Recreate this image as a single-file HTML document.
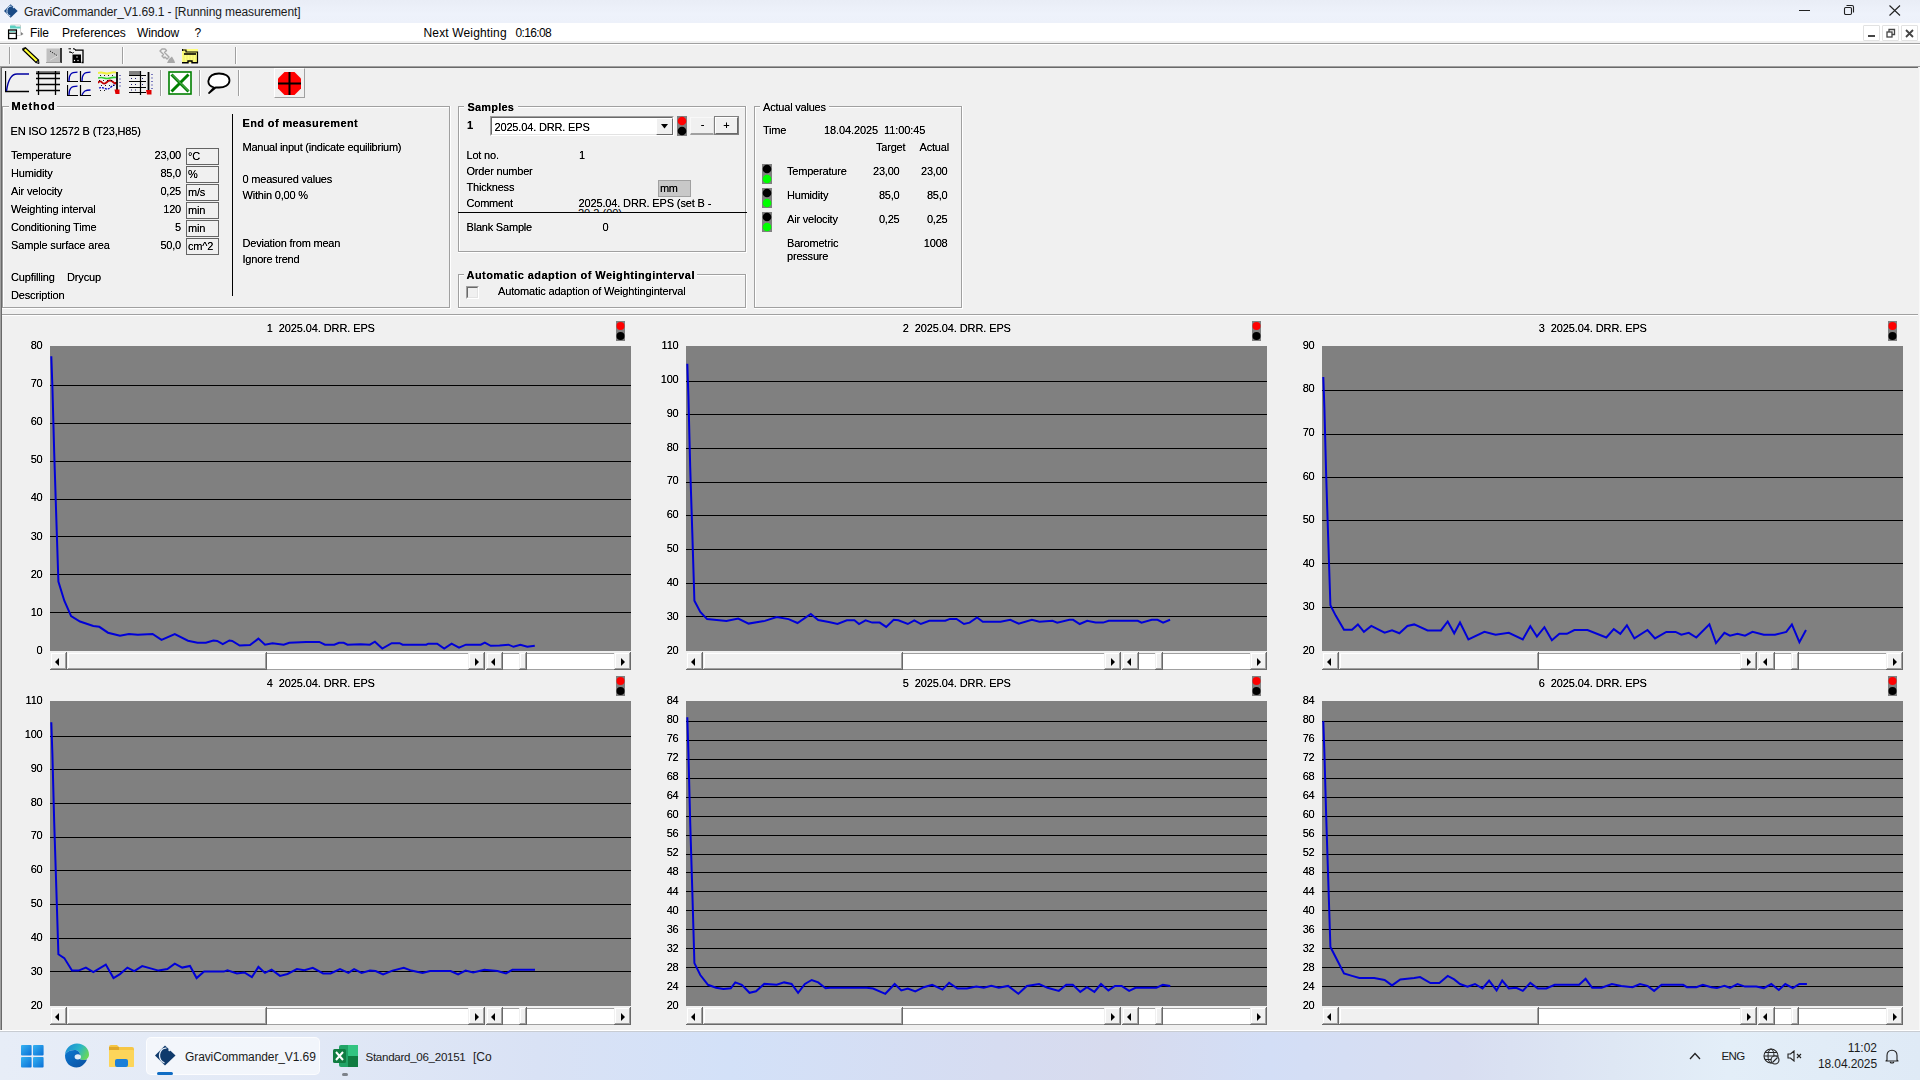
<!DOCTYPE html><html><head><meta charset="utf-8"><style>
html,body{margin:0;padding:0;width:1920px;height:1080px;overflow:hidden;background:#f0f0f0;position:relative;font-family:"Liberation Sans",sans-serif;}
.t{position:absolute;white-space:nowrap;}
svg{position:absolute;}
.c{filter:url(#crisp);}
</style></head><body>
<svg width="0" height="0" style="position:absolute"><filter id="crisp" x="-5%" y="-20%" width="110%" height="140%"><feComponentTransfer><feFuncA type="linear" slope="1.3" intercept="0"/></feComponentTransfer></filter></svg>
<div style="position:absolute;left:0px;top:0px;width:1920px;height:23px;background:linear-gradient(180deg,#e9edf6 0%,#eef2fb 60%,#edf1fa 100%);"></div>
<svg style="left:4px;top:4px" width="14" height="14" viewBox="0 0 21 21"><path d="M10 0.5 L20.5 10.5 L10 20.5 L0 10.5 Z" fill="#1a4a85"/><path d="M11.5 3.2 A6.2 7.4 0 0 0 9.5 17.8" fill="none" stroke="#cfe0f5" stroke-width="1.5"/><circle cx="14.5" cy="5" r="1.4" fill="#cfe0f5"/></svg>
<div class="t" style="left:24px;top:6.14px;font-size:12px;line-height:12px;color:#1a1a1a;letter-spacing:-0.11px;">GraviCommander_V1.69.1 - [Running measurement]</div>
<div style="position:absolute;left:1799px;top:10px;width:11px;height:1px;background:#222;"></div>
<svg style="left:1843px;top:4px" width="12" height="12" viewBox="0 0 12 12"><rect x="1.5" y="3.5" width="7" height="7" rx="1.2" fill="none" stroke="#222" stroke-width="1.1"/><path d="M3.5 1.5 H9 Q10.5 1.5 10.5 3 V8.5" fill="none" stroke="#222" stroke-width="1.1"/></svg>
<svg style="left:1889px;top:5px" width="12" height="11" viewBox="0 0 12 11"><path d="M0.5 0.5 L11 10.5 M11 0.5 L0.5 10.5" stroke="#222" stroke-width="1.1"/></svg>
<div style="position:absolute;left:0px;top:23px;width:1920px;height:18px;background:#ffffff;"></div>
<svg style="left:7px;top:24px" width="18" height="16" viewBox="0 0 18 16"><path d="M3.5 1 H13.5 V11.5 H6" fill="#fff" stroke="#c8c8c8" stroke-width="0.8"/><path d="M3 1.5 H8 L9 2.5 H13.5 V4.5 H3 Z" fill="#5ccfc0"/><path d="M14 8 L16.5 10 L14 11.5 Z" fill="#808080"/><rect x="1.6" y="6" width="7.8" height="8.6" fill="#fff" stroke="#000" stroke-width="1.3"/><path d="M2.5 7.7 H8.5" stroke="#5ccfc0" stroke-width="1.1"/><path d="M1.6 9.3 H9.4" stroke="#000" stroke-width="1.1"/></svg>
<div class="t" style="left:30px;top:26.84px;font-size:12px;line-height:12px;color:#000;letter-spacing:-0.1px;">File</div>
<div class="t" style="left:62px;top:26.84px;font-size:12px;line-height:12px;color:#000;letter-spacing:-0.1px;">Preferences</div>
<div class="t" style="left:137px;top:26.84px;font-size:12px;line-height:12px;color:#000;letter-spacing:-0.1px;">Window</div>
<div class="t" style="left:194.5px;top:26.84px;font-size:12px;line-height:12px;color:#000;letter-spacing:-0.1px;">?</div>
<div class="t" style="left:423.5px;top:26.84px;font-size:12px;line-height:12px;color:#000;letter-spacing:0.15px;">Next Weighting</div>
<div class="t" style="left:515.5px;top:26.84px;font-size:12px;line-height:12px;color:#000;letter-spacing:-0.63px;">0:16:08</div>
<div style="position:absolute;left:1863px;top:25px;width:17px;height:16px;background:#fff;border:1px solid #e2e2e2;box-sizing:border-box;border-radius:1px;"></div>
<div style="position:absolute;left:1882px;top:25px;width:17px;height:16px;background:#fff;border:1px solid #e2e2e2;box-sizing:border-box;border-radius:1px;"></div>
<div style="position:absolute;left:1901px;top:25px;width:17px;height:16px;background:#fff;border:1px solid #e2e2e2;box-sizing:border-box;border-radius:1px;"></div>
<div style="position:absolute;left:1868px;top:35px;width:7px;height:2px;background:#444;"></div>
<svg style="left:1886px;top:28px" width="10" height="10" viewBox="0 0 10 10"><rect x="1" y="4" width="5" height="5" fill="none" stroke="#444" stroke-width="1.3"/><path d="M3 4 V1.5 H8.5 V6.5 H6" fill="none" stroke="#444" stroke-width="1.3"/></svg>
<svg style="left:1905px;top:29px" width="9" height="9" viewBox="0 0 9 9"><path d="M1 1 L8 8 M8 1 L1 8" stroke="#444" stroke-width="1.8"/></svg>
<div style="position:absolute;left:0px;top:43px;width:1920px;height:1px;background:#a0a0a0;"></div>
<div style="position:absolute;left:0px;top:44px;width:1920px;height:1px;background:#ffffff;"></div>
<div style="position:absolute;left:0px;top:45px;width:1920px;height:21px;background:#f0f0f0;"></div>
<div style="position:absolute;left:9px;top:47px;width:1px;height:17px;background:#a0a0a0;"></div>
<div style="position:absolute;left:10px;top:47px;width:1px;height:17px;background:#fff;"></div>
<div style="position:absolute;left:122px;top:47px;width:1px;height:17px;background:#a0a0a0;"></div>
<div style="position:absolute;left:123px;top:47px;width:1px;height:17px;background:#fff;"></div>
<div style="position:absolute;left:235px;top:47px;width:1px;height:17px;background:#a0a0a0;"></div>
<div style="position:absolute;left:236px;top:47px;width:1px;height:17px;background:#fff;"></div>
<svg style="left:22px;top:47px" width="18" height="18" viewBox="0 0 18 18"><path d="M1 3 L3.5 0.8 L16.5 13 L14 15.5 Z" fill="#ffff30" stroke="#000" stroke-width="1.2" stroke-linejoin="miter"/><path d="M14 15.5 L16.5 13 L17 16.5 Z" fill="#c0c0c0" stroke="#000" stroke-width="1"/><path d="M2.5 4.5 L12.5 13.8" stroke="#000" stroke-width="0.8" stroke-dasharray="1 1"/><path d="M1.5 1 H3.5 M1 1 V3" stroke="#000" stroke-width="1.2"/></svg>
<svg style="left:46px;top:48px" width="16" height="15" viewBox="0 0 16 15"><rect x="0.5" y="0.5" width="14" height="13.5" fill="#c0c0c0"/><path d="M15 0 V15" stroke="#000" stroke-width="1.5"/><path d="M0 14.5 H14.5" stroke="#a0a0a0" stroke-width="1"/><path d="M4 3 L11 7.5" stroke="#000" stroke-width="1" stroke-dasharray="1 1.3"/><path d="M11.5 8 L3.5 12.5" stroke="#fff" stroke-width="1" stroke-dasharray="1 1.3"/></svg>
<svg style="left:68px;top:48px" width="17" height="16" viewBox="0 0 17 16"><path d="M7 2.2 H15 V14.5 H13.5" fill="none" stroke="#000" stroke-width="1.3"/><rect x="4.5" y="6.5" width="8.5" height="8.5" fill="#000"/><circle cx="6.5" cy="12.5" r="0.7" fill="#fff"/><circle cx="10" cy="12.5" r="0.7" fill="#fff"/><circle cx="9" cy="9" r="0.7" fill="#fff"/><path d="M0.5 0.8 H3 M1 4 H3 L4 5 M5 0.8 H6.5 L7.5 2 M4.5 5.5 L5.5 4" stroke="#000" stroke-width="1"/></svg>
<svg style="left:159px;top:48px" width="17" height="16" viewBox="0 0 17 16"><path d="M1 3 L3 1 H6 L7.5 2.5 L5.5 4.5 L10 9 L8 11 L6 9 L5 10 L3 8 L4.5 6.5 Z" fill="none" stroke="#a8a8a8" stroke-width="1.4" stroke-linejoin="round"/><path d="M10 11 L13 8.5 L15.5 13 L16 15 H8 Z" fill="#a8a8a8"/></svg>
<svg style="left:182px;top:49px" width="17" height="15" viewBox="0 0 17 15"><rect x="0" y="0" width="16" height="14" fill="#ffff80"/><path d="M2 1 V13 M5 1 V13 M8 3 V13 M11 3 V13 M14 3 V13" stroke="#e6e66a" stroke-width="0.8"/><path d="M0.5 0 V2 M0.5 1 H4 V3 H15.5 V14" fill="none" stroke="#000" stroke-width="1.2"/><path d="M2 5 H14" stroke="#000" stroke-width="1.6"/><path d="M0 13.8 H6 V12 H10 V13.8 H16" fill="none" stroke="#000" stroke-width="1.4"/></svg>
<div style="position:absolute;left:0px;top:66px;width:1920px;height:1px;background:#a0a0a0;"></div>
<div style="position:absolute;left:0px;top:67px;width:1920px;height:1px;background:#696969;"></div>
<div style="position:absolute;left:0px;top:67px;width:1px;height:965px;background:#a0a0a0;"></div>
<div style="position:absolute;left:1px;top:67px;width:1px;height:965px;background:#696969;"></div>
<svg style="left:5px;top:71px" width="24" height="22" viewBox="0 0 24 22"><path d="M0.5 0 V20.5 H24" fill="none" stroke="#000" stroke-width="1.3"/><path d="M1.5 20 C3 9 7 3 12 3 H24" fill="none" stroke="#0000a0" stroke-width="1.4"/></svg>
<svg style="left:36px;top:71px" width="24" height="24" viewBox="0 0 24 24"><rect x="0" y="0" width="24" height="2" fill="#808080"/><path d="M0 2.5 H24 M0 7.5 H24 M0 13.5 H24 M0 19.5 H24 M2.5 0 V24 M19.5 0 V24" stroke="#000" stroke-width="1.3"/></svg>
<svg style="left:67px;top:71px" width="25" height="25" viewBox="0 0 25 25"><path d="M0.5 0 V10.5 H11.0" fill="none" stroke="#000" stroke-width="1.2"/><path d="M2.0 10 C2.0 4 3.5 1.2 10.5 1.2" fill="none" stroke="#0000b0" stroke-width="1.3"/><path d="M13.5 0 V10.5 H24.0" fill="none" stroke="#000" stroke-width="1.2"/><path d="M15.0 10 C15.0 4 16.5 1.2 23.5 1.2" fill="none" stroke="#0000b0" stroke-width="1.3"/><path d="M0.5 14 V24.5 H11.0" fill="none" stroke="#000" stroke-width="1.2"/><path d="M2.0 24 C2.0 18 3.5 15.2 10.5 15.2" fill="none" stroke="#0000b0" stroke-width="1.3"/><path d="M13.5 14 V24.5 H24.0" fill="none" stroke="#000" stroke-width="1.2"/><path d="M15.0 24 C16.5 20 18.5 19 23.5 19" fill="none" stroke="#0000b0" stroke-width="1.3"/></svg>
<svg style="left:98px;top:71px" width="24" height="24" viewBox="0 0 24 24"><path d="M0 2 Q3 1 6 2 T12 2 T18 1.5" stroke="#f0f040" stroke-width="2" fill="none"/><path d="M0 7 Q3 6 6 7 T12 7 T18 6.5" stroke="#30d030" stroke-width="1.6" fill="none"/><path d="M0 12 Q2 9 4 11.5 T9 11 T15 11 T18 11" stroke="#c00000" stroke-width="1.8" fill="none"/><path d="M1 17 Q4 16 7 17.5 T13 16 T17 15" stroke="#0000c0" stroke-width="1.3" fill="none" stroke-dasharray="2 1"/><path d="M2 4.5 H17 M1 9.5 H17 M3 14.5 H17 M2 19.5 H10" stroke="#000" stroke-width="0.9" stroke-dasharray="1 3"/><path d="M19 1 V19" stroke="#000" stroke-width="1.8"/><path d="M16.5 18.5 H21.5 V23 H17.5 Z" fill="#e00000"/><path d="M22 4 V17" stroke="#00008a" stroke-width="1" stroke-dasharray="1 2.5"/></svg>
<svg style="left:129px;top:71px" width="24" height="24" viewBox="0 0 24 24"><rect x="0" y="0" width="11" height="4" fill="#808080"/><path d="M0 4.5 H17 M0 10.5 H17 M0 16.5 H17 M0 21.5 H17 M11.5 0 V24" stroke="#000" stroke-width="1.2"/><path d="M19.5 1 V20" stroke="#000" stroke-width="1.8"/><path d="M17 19 H22.5 V23.5 H18 Z" fill="#e00000"/><path d="M2 7.5 H10 M13 7.5 H17 M2 13.5 H10 M13 13.5 H17 M2 19 H10" stroke="#000060" stroke-width="0.9" stroke-dasharray="1 3"/><path d="M23 3 V18" stroke="#00008a" stroke-width="1" stroke-dasharray="1 2.5"/></svg>
<div style="position:absolute;left:160px;top:70px;width:1px;height:26px;background:#a0a0a0;"></div>
<div style="position:absolute;left:161px;top:70px;width:1px;height:26px;background:#fff;"></div>
<svg style="left:168px;top:71px" width="24" height="24" viewBox="0 0 24 24"><rect x="1" y="1" width="22" height="22" fill="#fff" stroke="#008000" stroke-width="1.6"/><path d="M3.5 3.5 L20.5 20.5 M20.5 3.5 L3.5 20.5" stroke="#008000" stroke-width="3"/><path d="M4 3.5 L20.5 20" stroke="#e0f0e0" stroke-width="0.5"/></svg>
<div style="position:absolute;left:199px;top:70px;width:1px;height:26px;background:#a0a0a0;"></div>
<div style="position:absolute;left:200px;top:70px;width:1px;height:26px;background:#fff;"></div>
<svg style="left:207px;top:72px" width="24" height="22" viewBox="0 0 24 22"><path d="M7 15.5 C2 14 1 11 1.5 8.5 C2.5 3.5 7 1.5 12 1.5 C18 1.5 22.5 4 22.5 8.5 C22.5 13 17.5 15.5 12 15.5 C11 15.5 10 15.5 9 15.3 L2 21 Z" fill="#fff" stroke="#000" stroke-width="1.8" stroke-linejoin="round"/></svg>
<div style="position:absolute;left:238px;top:70px;width:1px;height:26px;background:#a0a0a0;"></div>
<div style="position:absolute;left:239px;top:70px;width:1px;height:26px;background:#fff;"></div>
<div style="position:absolute;left:274px;top:68px;width:31px;height:30px;background:#f0f0f0;border-top:1px solid #fff;border-left:1px solid #fff;border-right:1px solid #a0a0a0;border-bottom:1px solid #a0a0a0;box-sizing:border-box;"></div>
<svg style="left:278px;top:72px" width="23" height="23" viewBox="0 0 23 23"><path d="M6.5 0 H16.5 L23 6.5 V16.5 L16.5 23 H6.5 L0 16.5 V6.5 Z" fill="#ff0000"/><path d="M11.5 0 V23 M0 11.5 H23" stroke="#000" stroke-width="2"/></svg>
<div style="position:absolute;left:2px;top:106px;width:7px;height:1px;background:#a0a0a0;"></div>
<div style="position:absolute;left:3px;top:107px;width:6px;height:1px;background:#fff;"></div>
<div style="position:absolute;left:57px;top:106px;width:393px;height:1px;background:#a0a0a0;"></div>
<div style="position:absolute;left:57px;top:107px;width:393px;height:1px;background:#fff;"></div>
<div style="position:absolute;left:2px;top:106px;width:1px;height:202px;background:#a0a0a0;"></div>
<div style="position:absolute;left:3px;top:107px;width:1px;height:200px;background:#fff;"></div>
<div style="position:absolute;left:449px;top:106px;width:1px;height:202px;background:#a0a0a0;"></div>
<div style="position:absolute;left:450px;top:106px;width:1px;height:203px;background:#fff;"></div>
<div style="position:absolute;left:2px;top:307px;width:448px;height:1px;background:#a0a0a0;"></div>
<div style="position:absolute;left:2px;top:308px;width:449px;height:1px;background:#fff;"></div>
<div class="t c" style="left:11.6px;top:101.29px;font-size:11px;line-height:11px;font-weight:bold;color:#000;letter-spacing:0.8px;">Method</div>
<div class="t c" style="left:10.5px;top:125.69px;font-size:11px;line-height:11px;color:#000;letter-spacing:-0.15px;">EN ISO 12572 B (T23,H85)</div>
<div class="t c" style="left:11px;top:149.69px;font-size:11px;line-height:11px;color:#000;letter-spacing:-0.15px;">Temperature</div>
<div class="t c" style="right:1739px;top:149.69px;font-size:11px;line-height:11px;color:#000;letter-spacing:-0.2px;">23,00</div>
<div style="position:absolute;left:186px;top:148.0px;width:33px;height:17px;border:1px solid #646464;box-sizing:border-box;border-right-color:#646464;"></div>
<div class="t c" style="left:188px;top:150.69px;font-size:11px;line-height:11px;color:#000;letter-spacing:-0.2px;">°C</div>
<div class="t c" style="left:11px;top:167.69px;font-size:11px;line-height:11px;color:#000;letter-spacing:-0.15px;">Humidity</div>
<div class="t c" style="right:1739px;top:167.69px;font-size:11px;line-height:11px;color:#000;letter-spacing:-0.2px;">85,0</div>
<div style="position:absolute;left:186px;top:166.0px;width:33px;height:17px;border:1px solid #646464;box-sizing:border-box;border-right-color:#646464;"></div>
<div class="t c" style="left:188px;top:168.69px;font-size:11px;line-height:11px;color:#000;letter-spacing:-0.2px;">%</div>
<div class="t c" style="left:11px;top:185.69px;font-size:11px;line-height:11px;color:#000;letter-spacing:-0.15px;">Air velocity</div>
<div class="t c" style="right:1739px;top:185.69px;font-size:11px;line-height:11px;color:#000;letter-spacing:-0.2px;">0,25</div>
<div style="position:absolute;left:186px;top:184.0px;width:33px;height:17px;border:1px solid #646464;box-sizing:border-box;border-right-color:#646464;"></div>
<div class="t c" style="left:188px;top:186.69px;font-size:11px;line-height:11px;color:#000;letter-spacing:-0.2px;">m/s</div>
<div class="t c" style="left:11px;top:203.69px;font-size:11px;line-height:11px;color:#000;letter-spacing:-0.15px;">Weighting interval</div>
<div class="t c" style="right:1739px;top:203.69px;font-size:11px;line-height:11px;color:#000;letter-spacing:-0.2px;">120</div>
<div style="position:absolute;left:186px;top:202.0px;width:33px;height:17px;border:1px solid #646464;box-sizing:border-box;border-right-color:#646464;"></div>
<div class="t c" style="left:188px;top:204.69px;font-size:11px;line-height:11px;color:#000;letter-spacing:-0.2px;">min</div>
<div class="t c" style="left:11px;top:221.69px;font-size:11px;line-height:11px;color:#000;letter-spacing:-0.15px;">Conditioning Time</div>
<div class="t c" style="right:1739px;top:221.69px;font-size:11px;line-height:11px;color:#000;letter-spacing:-0.2px;">5</div>
<div style="position:absolute;left:186px;top:220.0px;width:33px;height:17px;border:1px solid #646464;box-sizing:border-box;border-right-color:#646464;"></div>
<div class="t c" style="left:188px;top:222.69px;font-size:11px;line-height:11px;color:#000;letter-spacing:-0.2px;">min</div>
<div class="t c" style="left:11px;top:239.69px;font-size:11px;line-height:11px;color:#000;letter-spacing:-0.15px;">Sample surface area</div>
<div class="t c" style="right:1739px;top:239.69px;font-size:11px;line-height:11px;color:#000;letter-spacing:-0.2px;">50,0</div>
<div style="position:absolute;left:186px;top:238.0px;width:33px;height:17px;border:1px solid #646464;box-sizing:border-box;border-right-color:#646464;"></div>
<div class="t c" style="left:188px;top:240.69px;font-size:11px;line-height:11px;color:#000;letter-spacing:-0.2px;">cm^2</div>
<div class="t c" style="left:11px;top:271.69px;font-size:11px;line-height:11px;color:#000;letter-spacing:-0.15px;">Cupfilling</div>
<div class="t c" style="left:67px;top:271.69px;font-size:11px;line-height:11px;color:#000;letter-spacing:-0.15px;">Drycup</div>
<div class="t c" style="left:11px;top:289.69px;font-size:11px;line-height:11px;color:#000;letter-spacing:-0.15px;">Description</div>
<div style="position:absolute;left:232px;top:114px;width:1px;height:182px;background:#000;"></div>
<div class="t c" style="left:242.5px;top:117.69px;font-size:11px;line-height:11px;font-weight:bold;color:#000;letter-spacing:0.38px;">End of measurement</div>
<div class="t c" style="left:242.5px;top:141.69px;font-size:11px;line-height:11px;color:#000;letter-spacing:-0.25px;">Manual input (indicate equilibrium)</div>
<div class="t c" style="left:242.5px;top:173.69px;font-size:11px;line-height:11px;color:#000;letter-spacing:-0.2px;">0 measured values</div>
<div class="t c" style="left:242.5px;top:189.69px;font-size:11px;line-height:11px;color:#000;letter-spacing:-0.2px;">Within 0,00 %</div>
<div class="t c" style="left:242.5px;top:238.19px;font-size:11px;line-height:11px;color:#000;letter-spacing:-0.2px;">Deviation from mean</div>
<div class="t c" style="left:242.5px;top:253.69px;font-size:11px;line-height:11px;color:#000;letter-spacing:-0.2px;">Ignore trend</div>
<div style="position:absolute;left:458px;top:106px;width:6px;height:1px;background:#a0a0a0;"></div>
<div style="position:absolute;left:459px;top:107px;width:5px;height:1px;background:#fff;"></div>
<div style="position:absolute;left:518px;top:106px;width:228px;height:1px;background:#a0a0a0;"></div>
<div style="position:absolute;left:518px;top:107px;width:228px;height:1px;background:#fff;"></div>
<div style="position:absolute;left:458px;top:106px;width:1px;height:146px;background:#a0a0a0;"></div>
<div style="position:absolute;left:459px;top:107px;width:1px;height:144px;background:#fff;"></div>
<div style="position:absolute;left:745px;top:106px;width:1px;height:146px;background:#a0a0a0;"></div>
<div style="position:absolute;left:746px;top:106px;width:1px;height:147px;background:#fff;"></div>
<div style="position:absolute;left:458px;top:251px;width:288px;height:1px;background:#a0a0a0;"></div>
<div style="position:absolute;left:458px;top:252px;width:289px;height:1px;background:#fff;"></div>
<div class="t c" style="left:467.5px;top:101.69px;font-size:11px;line-height:11px;font-weight:bold;color:#000;letter-spacing:0.2px;">Samples</div>
<div class="t c" style="left:467px;top:119.69px;font-size:11px;line-height:11px;font-weight:bold;color:#000;">1</div>
<div style="position:absolute;left:490px;top:116px;width:184px;height:20px;background:#fff;border-top:1px solid #a0a0a0;border-left:1px solid #a0a0a0;border-right:1px solid #fff;border-bottom:1px solid #fff;box-sizing:border-box;"></div>
<div style="position:absolute;left:491px;top:117px;width:182px;height:18px;border-top:1px solid #696969;border-left:1px solid #696969;border-right:1px solid #e3e3e3;border-bottom:1px solid #e3e3e3;box-sizing:border-box;"></div>
<div class="t c" style="left:494.5px;top:121.69px;font-size:11px;line-height:11px;color:#000;letter-spacing:-0.16px;">2025.04. DRR. EPS</div>
<div style="position:absolute;left:656px;top:118px;width:17px;height:17px;background:#f0f0f0;border-top:1px solid #fff;border-left:1px solid #fff;border-right:1px solid #696969;border-bottom:1px solid #696969;box-sizing:border-box;"></div>
<svg style="left:661px;top:124px" width="8" height="5"><path d="M0 0 H7 L3.5 4.5 Z" fill="#000"/></svg>
<div style="position:absolute;left:677px;top:116px;width:10px;height:20px;background:#808080;"></div>
<svg style="left:677px;top:116px" width="10" height="20"><circle cx="5" cy="5" r="4.3" fill="#ff0000"/><circle cx="5" cy="15" r="4.3" fill="#000"/></svg>
<div style="position:absolute;left:690px;top:117px;width:24px;height:18px;background:#f0f0f0;border-top:1px solid #f8f8f8;border-left:1px solid #f8f8f8;border-bottom:2px solid #a0a0a0;border-right:1px solid #e0e0e0;box-sizing:border-box;"></div>
<div class="t c" style="left:702.5px;transform:translateX(-50%);top:118.69px;font-size:11px;line-height:11px;color:#000;">-</div>
<div style="position:absolute;left:714px;top:116px;width:25px;height:19px;background:#f0f0f0;border:1px solid #808080;box-sizing:border-box;"></div>
<div style="position:absolute;left:715px;top:117px;width:23px;height:17px;border-top:1px solid #fff;border-left:1px solid #fff;border-right:1px solid #696969;border-bottom:1px solid #696969;box-sizing:border-box;"></div>
<div class="t c" style="left:726.5px;transform:translateX(-50%);top:119.69px;font-size:11px;line-height:11px;color:#000;">+</div>
<div class="t c" style="left:466.5px;top:149.69px;font-size:11px;line-height:11px;color:#000;letter-spacing:-0.2px;">Lot no.</div>
<div class="t c" style="left:466.5px;top:165.69px;font-size:11px;line-height:11px;color:#000;letter-spacing:-0.2px;">Order number</div>
<div class="t c" style="left:466.5px;top:181.69px;font-size:11px;line-height:11px;color:#000;letter-spacing:-0.2px;">Thickness</div>
<div class="t c" style="left:466.5px;top:197.69px;font-size:11px;line-height:11px;color:#000;letter-spacing:-0.2px;">Comment</div>
<div class="t c" style="left:579px;top:149.69px;font-size:11px;line-height:11px;color:#000;">1</div>
<div style="position:absolute;left:658px;top:180px;width:33px;height:17px;background:#c8c8c8;border:1px solid #a0a0a0;box-sizing:border-box;"></div>
<div class="t c" style="left:660px;top:183.19px;font-size:11px;line-height:11px;color:#000;letter-spacing:-0.3px;">mm</div>
<div class="t c" style="left:578.5px;top:197.69px;font-size:11px;line-height:11px;color:#000;letter-spacing:-0.14px;">2025.04. DRR. EPS (set B -</div>
<div style="position:absolute;left:578px;top:209px;width:60px;height:3px;overflow:hidden;"><div class="t" style="left:0;top:-1px;font-size:11px;line-height:11px;">20.2 (00)</div></div>
<div style="position:absolute;left:458px;top:212px;width:289px;height:1px;background:#000;"></div>
<div class="t c" style="left:466.5px;top:221.69px;font-size:11px;line-height:11px;color:#000;letter-spacing:-0.2px;">Blank Sample</div>
<div class="t c" style="left:602.5px;top:221.69px;font-size:11px;line-height:11px;color:#000;">0</div>
<div style="position:absolute;left:458px;top:274px;width:6px;height:1px;background:#a0a0a0;"></div>
<div style="position:absolute;left:459px;top:275px;width:5px;height:1px;background:#fff;"></div>
<div style="position:absolute;left:697px;top:274px;width:49px;height:1px;background:#a0a0a0;"></div>
<div style="position:absolute;left:697px;top:275px;width:49px;height:1px;background:#fff;"></div>
<div style="position:absolute;left:458px;top:274px;width:1px;height:34px;background:#a0a0a0;"></div>
<div style="position:absolute;left:459px;top:275px;width:1px;height:32px;background:#fff;"></div>
<div style="position:absolute;left:745px;top:274px;width:1px;height:34px;background:#a0a0a0;"></div>
<div style="position:absolute;left:746px;top:274px;width:1px;height:35px;background:#fff;"></div>
<div style="position:absolute;left:458px;top:307px;width:288px;height:1px;background:#a0a0a0;"></div>
<div style="position:absolute;left:458px;top:308px;width:289px;height:1px;background:#fff;"></div>
<div class="t c" style="left:466.5px;top:270.19px;font-size:11px;line-height:11px;font-weight:bold;color:#000;letter-spacing:0.44px;">Automatic adaption of Weightinginterval</div>
<div style="position:absolute;left:466px;top:286px;width:13px;height:13px;background:#f0f0f0;border-top:1px solid #a0a0a0;border-left:1px solid #a0a0a0;border-right:1px solid #fff;border-bottom:1px solid #fff;box-sizing:border-box;"></div>
<div style="position:absolute;left:467px;top:287px;width:11px;height:11px;border-top:1px solid #696969;border-left:1px solid #696969;border-right:1px solid #e3e3e3;border-bottom:1px solid #e3e3e3;box-sizing:border-box;"></div>
<div class="t c" style="left:498px;top:285.69px;font-size:11px;line-height:11px;color:#000;letter-spacing:-0.155px;">Automatic adaption of Weightinginterval</div>
<div style="position:absolute;left:754px;top:106px;width:6px;height:1px;background:#a0a0a0;"></div>
<div style="position:absolute;left:755px;top:107px;width:5px;height:1px;background:#fff;"></div>
<div style="position:absolute;left:829px;top:106px;width:133px;height:1px;background:#a0a0a0;"></div>
<div style="position:absolute;left:829px;top:107px;width:133px;height:1px;background:#fff;"></div>
<div style="position:absolute;left:754px;top:106px;width:1px;height:202px;background:#a0a0a0;"></div>
<div style="position:absolute;left:755px;top:107px;width:1px;height:200px;background:#fff;"></div>
<div style="position:absolute;left:961px;top:106px;width:1px;height:202px;background:#a0a0a0;"></div>
<div style="position:absolute;left:962px;top:106px;width:1px;height:203px;background:#fff;"></div>
<div style="position:absolute;left:754px;top:307px;width:208px;height:1px;background:#a0a0a0;"></div>
<div style="position:absolute;left:754px;top:308px;width:209px;height:1px;background:#fff;"></div>
<div class="t c" style="left:763px;top:101.69px;font-size:11px;line-height:11px;color:#000;letter-spacing:-0.2px;">Actual values</div>
<div class="t c" style="left:763px;top:125.19px;font-size:11px;line-height:11px;color:#000;letter-spacing:-0.2px;">Time</div>
<div class="t c" style="left:824px;top:125.19px;font-size:11px;line-height:11px;color:#000;letter-spacing:-0.1px;">18.04.2025&nbsp;&nbsp;11:00:45</div>
<div class="t c" style="left:876px;top:141.69px;font-size:11px;line-height:11px;color:#000;letter-spacing:-0.2px;">Target</div>
<div class="t c" style="left:919.5px;top:141.69px;font-size:11px;line-height:11px;color:#000;letter-spacing:-0.2px;">Actual</div>
<div style="position:absolute;left:762px;top:164px;width:10px;height:20px;background:#808080;"></div>
<svg style="left:762px;top:164px" width="10" height="20"><circle cx="5" cy="5" r="4.3" fill="#000"/><circle cx="5" cy="15" r="4.3" fill="#00ff00"/></svg>
<div class="t c" style="left:787px;top:165.69px;font-size:11px;line-height:11px;color:#000;letter-spacing:-0.2px;">Temperature</div>
<div class="t c" style="right:1020.5px;top:165.69px;font-size:11px;line-height:11px;color:#000;letter-spacing:-0.2px;">23,00</div>
<div class="t c" style="right:972.5px;top:165.69px;font-size:11px;line-height:11px;color:#000;letter-spacing:-0.2px;">23,00</div>
<div style="position:absolute;left:762px;top:188px;width:10px;height:20px;background:#808080;"></div>
<svg style="left:762px;top:188px" width="10" height="20"><circle cx="5" cy="5" r="4.3" fill="#000"/><circle cx="5" cy="15" r="4.3" fill="#00ff00"/></svg>
<div class="t c" style="left:787px;top:189.69px;font-size:11px;line-height:11px;color:#000;letter-spacing:-0.2px;">Humidity</div>
<div class="t c" style="right:1020.5px;top:189.69px;font-size:11px;line-height:11px;color:#000;letter-spacing:-0.2px;">85,0</div>
<div class="t c" style="right:972.5px;top:189.69px;font-size:11px;line-height:11px;color:#000;letter-spacing:-0.2px;">85,0</div>
<div style="position:absolute;left:762px;top:212px;width:10px;height:20px;background:#808080;"></div>
<svg style="left:762px;top:212px" width="10" height="20"><circle cx="5" cy="5" r="4.3" fill="#000"/><circle cx="5" cy="15" r="4.3" fill="#00ff00"/></svg>
<div class="t c" style="left:787px;top:213.69px;font-size:11px;line-height:11px;color:#000;letter-spacing:-0.2px;">Air velocity</div>
<div class="t c" style="right:1020.5px;top:213.69px;font-size:11px;line-height:11px;color:#000;letter-spacing:-0.2px;">0,25</div>
<div class="t c" style="right:972.5px;top:213.69px;font-size:11px;line-height:11px;color:#000;letter-spacing:-0.2px;">0,25</div>
<div class="t c" style="left:787px;top:237.69px;font-size:11px;line-height:11px;color:#000;letter-spacing:-0.2px;">Barometric</div>
<div class="t c" style="left:787px;top:250.69px;font-size:11px;line-height:11px;color:#000;letter-spacing:-0.2px;">pressure</div>
<div class="t c" style="right:972.5px;top:237.69px;font-size:11px;line-height:11px;color:#000;letter-spacing:-0.2px;">1008</div>
<div style="position:absolute;left:2px;top:314px;width:1918px;height:1px;background:#a0a0a0;"></div>
<div style="position:absolute;left:2px;top:315px;width:1918px;height:1px;background:#fff;"></div>
<div class="t c" style="left:266.8px;top:322.69px;font-size:11px;line-height:11px;color:#000;letter-spacing:-0.1px;">1&nbsp;&nbsp;2025.04. DRR. EPS</div>
<div style="position:absolute;left:616px;top:321px;width:9px;height:20px;background:#808080;"></div>
<svg style="left:616px;top:321px" width="9" height="20"><circle cx="4.5" cy="5" r="4" fill="#ff0000"/><circle cx="4.5" cy="15" r="4" fill="#000"/></svg>
<svg style="left:50px;top:346px" width="581" height="305" viewBox="0 0 581 305"><rect x="0" y="0" width="581" height="305" fill="#808080"/><rect x="0" y="39" width="581" height="1" fill="#000"/><rect x="0" y="77" width="581" height="1" fill="#000"/><rect x="0" y="115" width="581" height="1" fill="#000"/><rect x="0" y="153" width="581" height="1" fill="#000"/><rect x="0" y="190" width="581" height="1" fill="#000"/><rect x="0" y="228" width="581" height="1" fill="#000"/><rect x="0" y="266" width="581" height="1" fill="#000"/><polyline points="1.3,10.3 2.4,41.0 4.2,106.6 6.3,171.8 8.4,235.5 14.3,254.7 21.1,270.1 30.0,275.5 43.3,280.0 49.3,280.8 58.0,286.7 70.0,289.7 78.9,288.0 87.8,288.8 102.6,288.0 111.5,293.8 124.8,288.0 138.0,294.7 147.5,296.8 155.9,296.8 163.4,294.5 167.2,294.9 172.8,298.2 179.4,294.5 182.2,294.9 189.7,299.6 200.0,299.1 208.4,292.6 215.0,298.7 222.5,297.3 233.7,298.7 239.3,296.8 256.2,295.9 269.3,295.9 275.0,298.7 284.3,298.7 289.0,296.8 293.7,296.8 297.5,298.7 310.6,298.2 319.9,298.7 324.9,295.7 332.3,302.6 341.7,297.2 349.6,297.2 352.6,298.7 376.3,298.7 378.3,297.7 387.2,297.7 394.2,302.6 401.6,297.7 409.0,301.6 415.9,298.7 430.8,298.7 434.8,296.7 440.7,299.8 449.6,299.4 458.5,298.7 463.5,300.8 470.4,298.7 477.3,300.8 484.8,299.8" fill="none" stroke="#0000d8" stroke-width="2" stroke-linejoin="miter"/></svg>
<div class="t c" style="right:1877.5px;top:339.79px;font-size:11px;line-height:11px;color:#000;letter-spacing:-0.2px;">80</div>
<div class="t c" style="right:1877.5px;top:377.94px;font-size:11px;line-height:11px;color:#000;letter-spacing:-0.2px;">70</div>
<div class="t c" style="right:1877.5px;top:416.09px;font-size:11px;line-height:11px;color:#000;letter-spacing:-0.2px;">60</div>
<div class="t c" style="right:1877.5px;top:454.24px;font-size:11px;line-height:11px;color:#000;letter-spacing:-0.2px;">50</div>
<div class="t c" style="right:1877.5px;top:492.39px;font-size:11px;line-height:11px;color:#000;letter-spacing:-0.2px;">40</div>
<div class="t c" style="right:1877.5px;top:530.54px;font-size:11px;line-height:11px;color:#000;letter-spacing:-0.2px;">30</div>
<div class="t c" style="right:1877.5px;top:568.69px;font-size:11px;line-height:11px;color:#000;letter-spacing:-0.2px;">20</div>
<div class="t c" style="right:1877.5px;top:606.84px;font-size:11px;line-height:11px;color:#000;letter-spacing:-0.2px;">10</div>
<div class="t c" style="right:1877.5px;top:644.99px;font-size:11px;line-height:11px;color:#000;letter-spacing:-0.2px;">0</div>
<div style="position:absolute;left:50px;top:652px;width:17px;height:18px;background:#f0f0f0;box-shadow:inset -1px -1px 0 #696969, inset 1px 1px 0 #f0f0f0, inset -2px -2px 0 #a0a0a0, inset 2px 2px 0 #fff;"></div>
<svg style="left:55px;top:658px" width="4" height="8"><path d="M4 0 V8 L0 4 Z" fill="#000"/></svg>
<div style="position:absolute;left:67px;top:652px;width:200px;height:18px;background:#f0f0f0;box-shadow:inset -1px -1px 0 #696969, inset 1px 1px 0 #f0f0f0, inset -2px -2px 0 #a0a0a0, inset 2px 2px 0 #fff;"></div>
<div style="position:absolute;left:267px;top:652px;width:201px;height:18px;background:#fff;border-top:1px solid #f0f0f0;box-shadow:inset 0 1px 0 #a0a0a0, inset 0 -1px 0 #a0a0a0;box-sizing:border-box;"></div>
<div style="position:absolute;left:468px;top:652px;width:17px;height:18px;background:#f0f0f0;box-shadow:inset -1px -1px 0 #696969, inset 1px 1px 0 #f0f0f0, inset -2px -2px 0 #a0a0a0, inset 2px 2px 0 #fff;"></div>
<svg style="left:475px;top:658px" width="4" height="8"><path d="M0 0 V8 L4 4 Z" fill="#000"/></svg>
<div style="position:absolute;left:485px;top:652px;width:1px;height:18px;background:#f0f0f0;"></div>
<div style="position:absolute;left:486px;top:652px;width:17px;height:18px;background:#f0f0f0;box-shadow:inset -1px -1px 0 #696969, inset 1px 1px 0 #f0f0f0, inset -2px -2px 0 #a0a0a0, inset 2px 2px 0 #fff;"></div>
<svg style="left:491px;top:658px" width="4" height="8"><path d="M4 0 V8 L0 4 Z" fill="#000"/></svg>
<div style="position:absolute;left:503px;top:652px;width:16px;height:18px;background:#fff;border-top:1px solid #f0f0f0;box-shadow:inset 0 1px 0 #a0a0a0, inset 0 -1px 0 #a0a0a0;box-sizing:border-box;"></div>
<div style="position:absolute;left:519px;top:652px;width:8px;height:18px;background:#f0f0f0;box-shadow:inset -1px -1px 0 #696969, inset 1px 1px 0 #f0f0f0, inset -2px -2px 0 #a0a0a0, inset 2px 2px 0 #fff;"></div>
<div style="position:absolute;left:527px;top:652px;width:87px;height:18px;background:#fff;border-top:1px solid #f0f0f0;box-shadow:inset 0 1px 0 #a0a0a0, inset 0 -1px 0 #a0a0a0;box-sizing:border-box;"></div>
<div style="position:absolute;left:614px;top:652px;width:17px;height:18px;background:#f0f0f0;box-shadow:inset -1px -1px 0 #696969, inset 1px 1px 0 #f0f0f0, inset -2px -2px 0 #a0a0a0, inset 2px 2px 0 #fff;"></div>
<svg style="left:621px;top:658px" width="4" height="8"><path d="M0 0 V8 L4 4 Z" fill="#000"/></svg>
<div class="t c" style="left:902.8px;top:322.69px;font-size:11px;line-height:11px;color:#000;letter-spacing:-0.1px;">2&nbsp;&nbsp;2025.04. DRR. EPS</div>
<div style="position:absolute;left:1252px;top:321px;width:9px;height:20px;background:#808080;"></div>
<svg style="left:1252px;top:321px" width="9" height="20"><circle cx="4.5" cy="5" r="4" fill="#ff0000"/><circle cx="4.5" cy="15" r="4" fill="#000"/></svg>
<svg style="left:686px;top:346px" width="581" height="305" viewBox="0 0 581 305"><rect x="0" y="0" width="581" height="305" fill="#808080"/><rect x="0" y="35" width="581" height="1" fill="#000"/><rect x="0" y="68" width="581" height="1" fill="#000"/><rect x="0" y="102" width="581" height="1" fill="#000"/><rect x="0" y="136" width="581" height="1" fill="#000"/><rect x="0" y="169" width="581" height="1" fill="#000"/><rect x="0" y="203" width="581" height="1" fill="#000"/><rect x="0" y="237" width="581" height="1" fill="#000"/><rect x="0" y="270" width="581" height="1" fill="#000"/><polyline points="1.3,17.7 2.4,50.3 4.2,121.4 6.3,186.6 8.4,254.7 14.3,266.0 21.1,273.1 40.4,274.9 52.2,272.5 62.6,277.6 78.9,274.9 90.7,271.0 102.6,273.1 111.5,277.0 124.8,268.0 132.2,274.0 144.0,276.2 151.5,278.0 160.9,274.3 168.4,274.3 173.0,278.0 179.6,274.3 186.2,276.6 193.7,276.6 200.2,280.9 207.7,273.8 212.4,274.3 221.8,278.0 228.3,274.3 234.9,278.0 243.3,274.8 259.3,274.8 264.0,272.9 270.5,272.9 278.0,278.0 283.6,276.6 291.1,271.5 296.8,275.7 303.3,275.7 314.6,275.7 324.3,273.8 332.7,277.6 345.9,273.8 353.4,275.7 366.5,274.8 371.2,276.6 383.4,273.8 387.1,273.8 393.7,278.0 401.2,274.8 409.6,276.6 417.1,276.6 422.7,274.8 451.8,274.8 455.5,276.6 465.8,273.8 471.5,273.8 477.1,276.6 484.1,273.8" fill="none" stroke="#0000d8" stroke-width="2" stroke-linejoin="miter"/></svg>
<div class="t c" style="right:1241.5px;top:339.79px;font-size:11px;line-height:11px;color:#000;letter-spacing:-0.2px;">110</div>
<div class="t c" style="right:1241.5px;top:373.70px;font-size:11px;line-height:11px;color:#000;letter-spacing:-0.2px;">100</div>
<div class="t c" style="right:1241.5px;top:407.61px;font-size:11px;line-height:11px;color:#000;letter-spacing:-0.2px;">90</div>
<div class="t c" style="right:1241.5px;top:441.52px;font-size:11px;line-height:11px;color:#000;letter-spacing:-0.2px;">80</div>
<div class="t c" style="right:1241.5px;top:475.43px;font-size:11px;line-height:11px;color:#000;letter-spacing:-0.2px;">70</div>
<div class="t c" style="right:1241.5px;top:509.34px;font-size:11px;line-height:11px;color:#000;letter-spacing:-0.2px;">60</div>
<div class="t c" style="right:1241.5px;top:543.26px;font-size:11px;line-height:11px;color:#000;letter-spacing:-0.2px;">50</div>
<div class="t c" style="right:1241.5px;top:577.17px;font-size:11px;line-height:11px;color:#000;letter-spacing:-0.2px;">40</div>
<div class="t c" style="right:1241.5px;top:611.08px;font-size:11px;line-height:11px;color:#000;letter-spacing:-0.2px;">30</div>
<div class="t c" style="right:1241.5px;top:644.99px;font-size:11px;line-height:11px;color:#000;letter-spacing:-0.2px;">20</div>
<div style="position:absolute;left:686px;top:652px;width:17px;height:18px;background:#f0f0f0;box-shadow:inset -1px -1px 0 #696969, inset 1px 1px 0 #f0f0f0, inset -2px -2px 0 #a0a0a0, inset 2px 2px 0 #fff;"></div>
<svg style="left:691px;top:658px" width="4" height="8"><path d="M4 0 V8 L0 4 Z" fill="#000"/></svg>
<div style="position:absolute;left:703px;top:652px;width:200px;height:18px;background:#f0f0f0;box-shadow:inset -1px -1px 0 #696969, inset 1px 1px 0 #f0f0f0, inset -2px -2px 0 #a0a0a0, inset 2px 2px 0 #fff;"></div>
<div style="position:absolute;left:903px;top:652px;width:201px;height:18px;background:#fff;border-top:1px solid #f0f0f0;box-shadow:inset 0 1px 0 #a0a0a0, inset 0 -1px 0 #a0a0a0;box-sizing:border-box;"></div>
<div style="position:absolute;left:1104px;top:652px;width:17px;height:18px;background:#f0f0f0;box-shadow:inset -1px -1px 0 #696969, inset 1px 1px 0 #f0f0f0, inset -2px -2px 0 #a0a0a0, inset 2px 2px 0 #fff;"></div>
<svg style="left:1111px;top:658px" width="4" height="8"><path d="M0 0 V8 L4 4 Z" fill="#000"/></svg>
<div style="position:absolute;left:1121px;top:652px;width:1px;height:18px;background:#f0f0f0;"></div>
<div style="position:absolute;left:1122px;top:652px;width:17px;height:18px;background:#f0f0f0;box-shadow:inset -1px -1px 0 #696969, inset 1px 1px 0 #f0f0f0, inset -2px -2px 0 #a0a0a0, inset 2px 2px 0 #fff;"></div>
<svg style="left:1127px;top:658px" width="4" height="8"><path d="M4 0 V8 L0 4 Z" fill="#000"/></svg>
<div style="position:absolute;left:1139px;top:652px;width:16px;height:18px;background:#fff;border-top:1px solid #f0f0f0;box-shadow:inset 0 1px 0 #a0a0a0, inset 0 -1px 0 #a0a0a0;box-sizing:border-box;"></div>
<div style="position:absolute;left:1155px;top:652px;width:8px;height:18px;background:#f0f0f0;box-shadow:inset -1px -1px 0 #696969, inset 1px 1px 0 #f0f0f0, inset -2px -2px 0 #a0a0a0, inset 2px 2px 0 #fff;"></div>
<div style="position:absolute;left:1163px;top:652px;width:87px;height:18px;background:#fff;border-top:1px solid #f0f0f0;box-shadow:inset 0 1px 0 #a0a0a0, inset 0 -1px 0 #a0a0a0;box-sizing:border-box;"></div>
<div style="position:absolute;left:1250px;top:652px;width:17px;height:18px;background:#f0f0f0;box-shadow:inset -1px -1px 0 #696969, inset 1px 1px 0 #f0f0f0, inset -2px -2px 0 #a0a0a0, inset 2px 2px 0 #fff;"></div>
<svg style="left:1257px;top:658px" width="4" height="8"><path d="M0 0 V8 L4 4 Z" fill="#000"/></svg>
<div class="t c" style="left:1538.8px;top:322.69px;font-size:11px;line-height:11px;color:#000;letter-spacing:-0.1px;">3&nbsp;&nbsp;2025.04. DRR. EPS</div>
<div style="position:absolute;left:1888px;top:321px;width:9px;height:20px;background:#808080;"></div>
<svg style="left:1888px;top:321px" width="9" height="20"><circle cx="4.5" cy="5" r="4" fill="#ff0000"/><circle cx="4.5" cy="15" r="4" fill="#000"/></svg>
<svg style="left:1322px;top:346px" width="581" height="305" viewBox="0 0 581 305"><rect x="0" y="0" width="581" height="305" fill="#808080"/><rect x="0" y="44" width="581" height="1" fill="#000"/><rect x="0" y="88" width="581" height="1" fill="#000"/><rect x="0" y="131" width="581" height="1" fill="#000"/><rect x="0" y="174" width="581" height="1" fill="#000"/><rect x="0" y="217" width="581" height="1" fill="#000"/><rect x="0" y="261" width="581" height="1" fill="#000"/><polyline points="1.3,31.0 2.4,62.1 4.2,130.3 6.3,195.5 8.4,259.2 13.7,269.6 22.0,283.8 30.0,283.8 35.9,278.4 41.9,285.9 49.3,279.9 62.6,286.7 70.0,284.4 77.4,287.3 85.4,279.9 92.2,278.4 105.6,284.4 118.9,284.4 125.7,275.5 132.2,287.3 138.0,276.5 146.4,293.4 162.4,285.9 173.6,288.7 186.8,286.8 200.8,293.4 208.3,280.3 214.9,290.6 222.4,281.2 229.9,294.3 237.4,287.8 244.9,287.8 252.4,284.0 265.5,284.0 284.3,291.5 291.8,283.1 298.3,287.8 304.9,279.3 312.4,292.4 325.5,284.0 333.0,292.4 344.3,285.9 353.6,285.9 359.3,288.7 366.8,286.8 374.3,291.5 387.4,278.4 394.0,297.1 402.4,286.8 408.0,289.6 415.5,287.8 423.0,289.6 430.5,285.9 441.8,288.7 453.0,288.7 464.3,285.9 469.9,278.4 477.4,296.2 484.0,284.0" fill="none" stroke="#0000d8" stroke-width="2" stroke-linejoin="miter"/></svg>
<div class="t c" style="right:605.5px;top:339.79px;font-size:11px;line-height:11px;color:#000;letter-spacing:-0.2px;">90</div>
<div class="t c" style="right:605.5px;top:383.39px;font-size:11px;line-height:11px;color:#000;letter-spacing:-0.2px;">80</div>
<div class="t c" style="right:605.5px;top:426.99px;font-size:11px;line-height:11px;color:#000;letter-spacing:-0.2px;">70</div>
<div class="t c" style="right:605.5px;top:470.59px;font-size:11px;line-height:11px;color:#000;letter-spacing:-0.2px;">60</div>
<div class="t c" style="right:605.5px;top:514.19px;font-size:11px;line-height:11px;color:#000;letter-spacing:-0.2px;">50</div>
<div class="t c" style="right:605.5px;top:557.79px;font-size:11px;line-height:11px;color:#000;letter-spacing:-0.2px;">40</div>
<div class="t c" style="right:605.5px;top:601.39px;font-size:11px;line-height:11px;color:#000;letter-spacing:-0.2px;">30</div>
<div class="t c" style="right:605.5px;top:644.99px;font-size:11px;line-height:11px;color:#000;letter-spacing:-0.2px;">20</div>
<div style="position:absolute;left:1322px;top:652px;width:17px;height:18px;background:#f0f0f0;box-shadow:inset -1px -1px 0 #696969, inset 1px 1px 0 #f0f0f0, inset -2px -2px 0 #a0a0a0, inset 2px 2px 0 #fff;"></div>
<svg style="left:1327px;top:658px" width="4" height="8"><path d="M4 0 V8 L0 4 Z" fill="#000"/></svg>
<div style="position:absolute;left:1339px;top:652px;width:200px;height:18px;background:#f0f0f0;box-shadow:inset -1px -1px 0 #696969, inset 1px 1px 0 #f0f0f0, inset -2px -2px 0 #a0a0a0, inset 2px 2px 0 #fff;"></div>
<div style="position:absolute;left:1539px;top:652px;width:201px;height:18px;background:#fff;border-top:1px solid #f0f0f0;box-shadow:inset 0 1px 0 #a0a0a0, inset 0 -1px 0 #a0a0a0;box-sizing:border-box;"></div>
<div style="position:absolute;left:1740px;top:652px;width:17px;height:18px;background:#f0f0f0;box-shadow:inset -1px -1px 0 #696969, inset 1px 1px 0 #f0f0f0, inset -2px -2px 0 #a0a0a0, inset 2px 2px 0 #fff;"></div>
<svg style="left:1747px;top:658px" width="4" height="8"><path d="M0 0 V8 L4 4 Z" fill="#000"/></svg>
<div style="position:absolute;left:1757px;top:652px;width:1px;height:18px;background:#f0f0f0;"></div>
<div style="position:absolute;left:1758px;top:652px;width:17px;height:18px;background:#f0f0f0;box-shadow:inset -1px -1px 0 #696969, inset 1px 1px 0 #f0f0f0, inset -2px -2px 0 #a0a0a0, inset 2px 2px 0 #fff;"></div>
<svg style="left:1763px;top:658px" width="4" height="8"><path d="M4 0 V8 L0 4 Z" fill="#000"/></svg>
<div style="position:absolute;left:1775px;top:652px;width:16px;height:18px;background:#fff;border-top:1px solid #f0f0f0;box-shadow:inset 0 1px 0 #a0a0a0, inset 0 -1px 0 #a0a0a0;box-sizing:border-box;"></div>
<div style="position:absolute;left:1791px;top:652px;width:8px;height:18px;background:#f0f0f0;box-shadow:inset -1px -1px 0 #696969, inset 1px 1px 0 #f0f0f0, inset -2px -2px 0 #a0a0a0, inset 2px 2px 0 #fff;"></div>
<div style="position:absolute;left:1799px;top:652px;width:87px;height:18px;background:#fff;border-top:1px solid #f0f0f0;box-shadow:inset 0 1px 0 #a0a0a0, inset 0 -1px 0 #a0a0a0;box-sizing:border-box;"></div>
<div style="position:absolute;left:1886px;top:652px;width:17px;height:18px;background:#f0f0f0;box-shadow:inset -1px -1px 0 #696969, inset 1px 1px 0 #f0f0f0, inset -2px -2px 0 #a0a0a0, inset 2px 2px 0 #fff;"></div>
<svg style="left:1893px;top:658px" width="4" height="8"><path d="M0 0 V8 L4 4 Z" fill="#000"/></svg>
<div class="t c" style="left:266.8px;top:677.69px;font-size:11px;line-height:11px;color:#000;letter-spacing:-0.1px;">4&nbsp;&nbsp;2025.04. DRR. EPS</div>
<div style="position:absolute;left:616px;top:676px;width:9px;height:20px;background:#808080;"></div>
<svg style="left:616px;top:676px" width="9" height="20"><circle cx="4.5" cy="5" r="4" fill="#ff0000"/><circle cx="4.5" cy="15" r="4" fill="#000"/></svg>
<svg style="left:50px;top:701px" width="581" height="305" viewBox="0 0 581 305"><rect x="0" y="0" width="581" height="305" fill="#808080"/><rect x="0" y="35" width="581" height="1" fill="#000"/><rect x="0" y="68" width="581" height="1" fill="#000"/><rect x="0" y="102" width="581" height="1" fill="#000"/><rect x="0" y="136" width="581" height="1" fill="#000"/><rect x="0" y="169" width="581" height="1" fill="#000"/><rect x="0" y="203" width="581" height="1" fill="#000"/><rect x="0" y="237" width="581" height="1" fill="#000"/><rect x="0" y="270" width="581" height="1" fill="#000"/><polyline points="1.3,21.3 2.4,53.3 4.2,121.4 6.3,186.6 8.4,253.3 14.3,257.1 22.0,269.6 28.5,269.6 35.9,266.6 43.3,271.0 55.8,263.6 63.5,277.0 70.0,273.1 77.4,266.6 84.2,270.1 92.2,265.1 108.5,269.6 117.4,268.1 124.8,262.7 132.2,266.6 140.0,265.0 146.6,277.1 154.1,270.6 173.8,270.6 177.5,269.3 186.9,272.4 194.4,271.5 201.9,276.2 208.4,265.9 215.0,271.9 221.6,268.7 230.0,274.9 237.5,273.0 246.9,268.1 254.4,269.3 262.8,266.8 273.1,272.4 280.6,272.4 290.0,268.1 298.4,271.9 304.1,268.1 311.6,271.9 320.0,269.6 325.6,270.0 333.1,273.4 342.5,269.6 353.8,266.8 361.3,269.6 372.5,271.9 380.0,270.0 400.6,270.0 408.1,273.4 415.6,269.6 423.1,271.5 434.4,268.7 447.5,270.0 456.0,272.4 462.5,268.7 485.0,268.7" fill="none" stroke="#0000d8" stroke-width="2" stroke-linejoin="miter"/></svg>
<div class="t c" style="right:1877.5px;top:694.79px;font-size:11px;line-height:11px;color:#000;letter-spacing:-0.2px;">110</div>
<div class="t c" style="right:1877.5px;top:728.70px;font-size:11px;line-height:11px;color:#000;letter-spacing:-0.2px;">100</div>
<div class="t c" style="right:1877.5px;top:762.61px;font-size:11px;line-height:11px;color:#000;letter-spacing:-0.2px;">90</div>
<div class="t c" style="right:1877.5px;top:796.52px;font-size:11px;line-height:11px;color:#000;letter-spacing:-0.2px;">80</div>
<div class="t c" style="right:1877.5px;top:830.43px;font-size:11px;line-height:11px;color:#000;letter-spacing:-0.2px;">70</div>
<div class="t c" style="right:1877.5px;top:864.34px;font-size:11px;line-height:11px;color:#000;letter-spacing:-0.2px;">60</div>
<div class="t c" style="right:1877.5px;top:898.26px;font-size:11px;line-height:11px;color:#000;letter-spacing:-0.2px;">50</div>
<div class="t c" style="right:1877.5px;top:932.17px;font-size:11px;line-height:11px;color:#000;letter-spacing:-0.2px;">40</div>
<div class="t c" style="right:1877.5px;top:966.08px;font-size:11px;line-height:11px;color:#000;letter-spacing:-0.2px;">30</div>
<div class="t c" style="right:1877.5px;top:999.99px;font-size:11px;line-height:11px;color:#000;letter-spacing:-0.2px;">20</div>
<div style="position:absolute;left:50px;top:1007px;width:17px;height:18px;background:#f0f0f0;box-shadow:inset -1px -1px 0 #696969, inset 1px 1px 0 #f0f0f0, inset -2px -2px 0 #a0a0a0, inset 2px 2px 0 #fff;"></div>
<svg style="left:55px;top:1013px" width="4" height="8"><path d="M4 0 V8 L0 4 Z" fill="#000"/></svg>
<div style="position:absolute;left:67px;top:1007px;width:200px;height:18px;background:#f0f0f0;box-shadow:inset -1px -1px 0 #696969, inset 1px 1px 0 #f0f0f0, inset -2px -2px 0 #a0a0a0, inset 2px 2px 0 #fff;"></div>
<div style="position:absolute;left:267px;top:1007px;width:201px;height:18px;background:#fff;border-top:1px solid #f0f0f0;box-shadow:inset 0 1px 0 #a0a0a0, inset 0 -1px 0 #a0a0a0;box-sizing:border-box;"></div>
<div style="position:absolute;left:468px;top:1007px;width:17px;height:18px;background:#f0f0f0;box-shadow:inset -1px -1px 0 #696969, inset 1px 1px 0 #f0f0f0, inset -2px -2px 0 #a0a0a0, inset 2px 2px 0 #fff;"></div>
<svg style="left:475px;top:1013px" width="4" height="8"><path d="M0 0 V8 L4 4 Z" fill="#000"/></svg>
<div style="position:absolute;left:485px;top:1007px;width:1px;height:18px;background:#f0f0f0;"></div>
<div style="position:absolute;left:486px;top:1007px;width:17px;height:18px;background:#f0f0f0;box-shadow:inset -1px -1px 0 #696969, inset 1px 1px 0 #f0f0f0, inset -2px -2px 0 #a0a0a0, inset 2px 2px 0 #fff;"></div>
<svg style="left:491px;top:1013px" width="4" height="8"><path d="M4 0 V8 L0 4 Z" fill="#000"/></svg>
<div style="position:absolute;left:503px;top:1007px;width:16px;height:18px;background:#fff;border-top:1px solid #f0f0f0;box-shadow:inset 0 1px 0 #a0a0a0, inset 0 -1px 0 #a0a0a0;box-sizing:border-box;"></div>
<div style="position:absolute;left:519px;top:1007px;width:8px;height:18px;background:#f0f0f0;box-shadow:inset -1px -1px 0 #696969, inset 1px 1px 0 #f0f0f0, inset -2px -2px 0 #a0a0a0, inset 2px 2px 0 #fff;"></div>
<div style="position:absolute;left:527px;top:1007px;width:87px;height:18px;background:#fff;border-top:1px solid #f0f0f0;box-shadow:inset 0 1px 0 #a0a0a0, inset 0 -1px 0 #a0a0a0;box-sizing:border-box;"></div>
<div style="position:absolute;left:614px;top:1007px;width:17px;height:18px;background:#f0f0f0;box-shadow:inset -1px -1px 0 #696969, inset 1px 1px 0 #f0f0f0, inset -2px -2px 0 #a0a0a0, inset 2px 2px 0 #fff;"></div>
<svg style="left:621px;top:1013px" width="4" height="8"><path d="M0 0 V8 L4 4 Z" fill="#000"/></svg>
<div class="t c" style="left:902.8px;top:677.69px;font-size:11px;line-height:11px;color:#000;letter-spacing:-0.1px;">5&nbsp;&nbsp;2025.04. DRR. EPS</div>
<div style="position:absolute;left:1252px;top:676px;width:9px;height:20px;background:#808080;"></div>
<svg style="left:1252px;top:676px" width="9" height="20"><circle cx="4.5" cy="5" r="4" fill="#ff0000"/><circle cx="4.5" cy="15" r="4" fill="#000"/></svg>
<svg style="left:686px;top:701px" width="581" height="305" viewBox="0 0 581 305"><rect x="0" y="0" width="581" height="305" fill="#808080"/><rect x="0" y="20" width="581" height="1" fill="#000"/><rect x="0" y="39" width="581" height="1" fill="#000"/><rect x="0" y="58" width="581" height="1" fill="#000"/><rect x="0" y="77" width="581" height="1" fill="#000"/><rect x="0" y="96" width="581" height="1" fill="#000"/><rect x="0" y="115" width="581" height="1" fill="#000"/><rect x="0" y="134" width="581" height="1" fill="#000"/><rect x="0" y="153" width="581" height="1" fill="#000"/><rect x="0" y="171" width="581" height="1" fill="#000"/><rect x="0" y="190" width="581" height="1" fill="#000"/><rect x="0" y="209" width="581" height="1" fill="#000"/><rect x="0" y="228" width="581" height="1" fill="#000"/><rect x="0" y="247" width="581" height="1" fill="#000"/><rect x="0" y="266" width="581" height="1" fill="#000"/><rect x="0" y="285" width="581" height="1" fill="#000"/><polyline points="1.3,16.2 2.4,51.8 4.2,121.4 6.3,189.6 8.4,262.1 14.3,274.0 22.0,283.8 30.0,286.7 37.4,287.9 44.8,287.3 49.3,281.4 55.8,283.8 63.5,291.8 70.0,290.3 78.3,282.9 90.7,283.8 98.1,281.4 105.6,282.9 112.1,291.8 118.9,282.9 125.7,279.0 132.2,281.4 139.6,287.3 144.0,286.8 180.6,286.8 187.1,287.5 199.3,292.8 208.7,283.0 215.3,289.4 221.8,287.5 229.3,290.5 237.8,286.2 246.2,283.8 256.5,288.6 263.1,281.9 271.5,287.5 280.9,287.5 290.3,285.6 297.8,286.8 305.3,284.9 312.8,286.8 322.1,284.9 332.4,292.8 340.9,284.9 353.1,283.0 361.5,286.8 372.8,289.9 380.3,283.8 386.8,283.8 394.3,290.9 400.9,286.2 408.4,290.9 415.0,283.0 422.4,289.4 429.0,284.9 435.6,284.9 443.1,289.9 449.6,286.8 470.3,286.8 476.8,283.8 484.3,284.9" fill="none" stroke="#0000d8" stroke-width="2" stroke-linejoin="miter"/></svg>
<div class="t c" style="right:1241.5px;top:694.79px;font-size:11px;line-height:11px;color:#000;letter-spacing:-0.2px;">84</div>
<div class="t c" style="right:1241.5px;top:713.86px;font-size:11px;line-height:11px;color:#000;letter-spacing:-0.2px;">80</div>
<div class="t c" style="right:1241.5px;top:732.94px;font-size:11px;line-height:11px;color:#000;letter-spacing:-0.2px;">76</div>
<div class="t c" style="right:1241.5px;top:752.01px;font-size:11px;line-height:11px;color:#000;letter-spacing:-0.2px;">72</div>
<div class="t c" style="right:1241.5px;top:771.09px;font-size:11px;line-height:11px;color:#000;letter-spacing:-0.2px;">68</div>
<div class="t c" style="right:1241.5px;top:790.16px;font-size:11px;line-height:11px;color:#000;letter-spacing:-0.2px;">64</div>
<div class="t c" style="right:1241.5px;top:809.24px;font-size:11px;line-height:11px;color:#000;letter-spacing:-0.2px;">60</div>
<div class="t c" style="right:1241.5px;top:828.31px;font-size:11px;line-height:11px;color:#000;letter-spacing:-0.2px;">56</div>
<div class="t c" style="right:1241.5px;top:847.39px;font-size:11px;line-height:11px;color:#000;letter-spacing:-0.2px;">52</div>
<div class="t c" style="right:1241.5px;top:866.46px;font-size:11px;line-height:11px;color:#000;letter-spacing:-0.2px;">48</div>
<div class="t c" style="right:1241.5px;top:885.54px;font-size:11px;line-height:11px;color:#000;letter-spacing:-0.2px;">44</div>
<div class="t c" style="right:1241.5px;top:904.61px;font-size:11px;line-height:11px;color:#000;letter-spacing:-0.2px;">40</div>
<div class="t c" style="right:1241.5px;top:923.69px;font-size:11px;line-height:11px;color:#000;letter-spacing:-0.2px;">36</div>
<div class="t c" style="right:1241.5px;top:942.76px;font-size:11px;line-height:11px;color:#000;letter-spacing:-0.2px;">32</div>
<div class="t c" style="right:1241.5px;top:961.84px;font-size:11px;line-height:11px;color:#000;letter-spacing:-0.2px;">28</div>
<div class="t c" style="right:1241.5px;top:980.91px;font-size:11px;line-height:11px;color:#000;letter-spacing:-0.2px;">24</div>
<div class="t c" style="right:1241.5px;top:999.99px;font-size:11px;line-height:11px;color:#000;letter-spacing:-0.2px;">20</div>
<div style="position:absolute;left:686px;top:1007px;width:17px;height:18px;background:#f0f0f0;box-shadow:inset -1px -1px 0 #696969, inset 1px 1px 0 #f0f0f0, inset -2px -2px 0 #a0a0a0, inset 2px 2px 0 #fff;"></div>
<svg style="left:691px;top:1013px" width="4" height="8"><path d="M4 0 V8 L0 4 Z" fill="#000"/></svg>
<div style="position:absolute;left:703px;top:1007px;width:200px;height:18px;background:#f0f0f0;box-shadow:inset -1px -1px 0 #696969, inset 1px 1px 0 #f0f0f0, inset -2px -2px 0 #a0a0a0, inset 2px 2px 0 #fff;"></div>
<div style="position:absolute;left:903px;top:1007px;width:201px;height:18px;background:#fff;border-top:1px solid #f0f0f0;box-shadow:inset 0 1px 0 #a0a0a0, inset 0 -1px 0 #a0a0a0;box-sizing:border-box;"></div>
<div style="position:absolute;left:1104px;top:1007px;width:17px;height:18px;background:#f0f0f0;box-shadow:inset -1px -1px 0 #696969, inset 1px 1px 0 #f0f0f0, inset -2px -2px 0 #a0a0a0, inset 2px 2px 0 #fff;"></div>
<svg style="left:1111px;top:1013px" width="4" height="8"><path d="M0 0 V8 L4 4 Z" fill="#000"/></svg>
<div style="position:absolute;left:1121px;top:1007px;width:1px;height:18px;background:#f0f0f0;"></div>
<div style="position:absolute;left:1122px;top:1007px;width:17px;height:18px;background:#f0f0f0;box-shadow:inset -1px -1px 0 #696969, inset 1px 1px 0 #f0f0f0, inset -2px -2px 0 #a0a0a0, inset 2px 2px 0 #fff;"></div>
<svg style="left:1127px;top:1013px" width="4" height="8"><path d="M4 0 V8 L0 4 Z" fill="#000"/></svg>
<div style="position:absolute;left:1139px;top:1007px;width:16px;height:18px;background:#fff;border-top:1px solid #f0f0f0;box-shadow:inset 0 1px 0 #a0a0a0, inset 0 -1px 0 #a0a0a0;box-sizing:border-box;"></div>
<div style="position:absolute;left:1155px;top:1007px;width:8px;height:18px;background:#f0f0f0;box-shadow:inset -1px -1px 0 #696969, inset 1px 1px 0 #f0f0f0, inset -2px -2px 0 #a0a0a0, inset 2px 2px 0 #fff;"></div>
<div style="position:absolute;left:1163px;top:1007px;width:87px;height:18px;background:#fff;border-top:1px solid #f0f0f0;box-shadow:inset 0 1px 0 #a0a0a0, inset 0 -1px 0 #a0a0a0;box-sizing:border-box;"></div>
<div style="position:absolute;left:1250px;top:1007px;width:17px;height:18px;background:#f0f0f0;box-shadow:inset -1px -1px 0 #696969, inset 1px 1px 0 #f0f0f0, inset -2px -2px 0 #a0a0a0, inset 2px 2px 0 #fff;"></div>
<svg style="left:1257px;top:1013px" width="4" height="8"><path d="M0 0 V8 L4 4 Z" fill="#000"/></svg>
<div class="t c" style="left:1538.8px;top:677.69px;font-size:11px;line-height:11px;color:#000;letter-spacing:-0.1px;">6&nbsp;&nbsp;2025.04. DRR. EPS</div>
<div style="position:absolute;left:1888px;top:676px;width:9px;height:20px;background:#808080;"></div>
<svg style="left:1888px;top:676px" width="9" height="20"><circle cx="4.5" cy="5" r="4" fill="#ff0000"/><circle cx="4.5" cy="15" r="4" fill="#000"/></svg>
<svg style="left:1322px;top:701px" width="581" height="305" viewBox="0 0 581 305"><rect x="0" y="0" width="581" height="305" fill="#808080"/><rect x="0" y="20" width="581" height="1" fill="#000"/><rect x="0" y="39" width="581" height="1" fill="#000"/><rect x="0" y="58" width="581" height="1" fill="#000"/><rect x="0" y="77" width="581" height="1" fill="#000"/><rect x="0" y="96" width="581" height="1" fill="#000"/><rect x="0" y="115" width="581" height="1" fill="#000"/><rect x="0" y="134" width="581" height="1" fill="#000"/><rect x="0" y="153" width="581" height="1" fill="#000"/><rect x="0" y="171" width="581" height="1" fill="#000"/><rect x="0" y="190" width="581" height="1" fill="#000"/><rect x="0" y="209" width="581" height="1" fill="#000"/><rect x="0" y="228" width="581" height="1" fill="#000"/><rect x="0" y="247" width="581" height="1" fill="#000"/><rect x="0" y="266" width="581" height="1" fill="#000"/><rect x="0" y="285" width="581" height="1" fill="#000"/><polyline points="1.3,20.1 2.4,51.8 4.2,115.5 6.3,180.7 8.4,245.9 13.7,256.2 22.0,272.5 30.0,274.9 37.4,277.0 52.2,277.0 62.6,279.0 70.0,284.4 78.3,278.4 92.2,277.0 98.1,276.1 108.5,282.0 117.4,282.0 125.7,274.9 132.2,278.4 138.0,283.0 145.5,285.6 153.0,283.0 160.5,287.5 167.1,279.6 174.6,289.4 180.2,279.6 186.8,287.5 194.3,286.8 200.8,289.9 208.3,281.9 215.8,287.5 224.3,287.5 232.7,283.8 257.1,283.8 263.6,277.8 270.2,286.8 279.6,286.8 289.9,283.0 299.3,284.9 310.5,286.2 318.0,283.0 325.5,284.9 332.1,289.9 339.6,283.8 361.1,283.8 364.9,286.2 374.3,286.2 380.8,283.8 389.3,286.2 394.9,287.1 402.4,284.9 408.0,286.8 415.5,283.0 423.0,285.6 434.3,285.6 441.8,287.1 449.3,283.0 456.8,289.0 463.3,283.0 470.8,287.1 477.4,283.0 484.9,283.0" fill="none" stroke="#0000d8" stroke-width="2" stroke-linejoin="miter"/></svg>
<div class="t c" style="right:605.5px;top:694.79px;font-size:11px;line-height:11px;color:#000;letter-spacing:-0.2px;">84</div>
<div class="t c" style="right:605.5px;top:713.86px;font-size:11px;line-height:11px;color:#000;letter-spacing:-0.2px;">80</div>
<div class="t c" style="right:605.5px;top:732.94px;font-size:11px;line-height:11px;color:#000;letter-spacing:-0.2px;">76</div>
<div class="t c" style="right:605.5px;top:752.01px;font-size:11px;line-height:11px;color:#000;letter-spacing:-0.2px;">72</div>
<div class="t c" style="right:605.5px;top:771.09px;font-size:11px;line-height:11px;color:#000;letter-spacing:-0.2px;">68</div>
<div class="t c" style="right:605.5px;top:790.16px;font-size:11px;line-height:11px;color:#000;letter-spacing:-0.2px;">64</div>
<div class="t c" style="right:605.5px;top:809.24px;font-size:11px;line-height:11px;color:#000;letter-spacing:-0.2px;">60</div>
<div class="t c" style="right:605.5px;top:828.31px;font-size:11px;line-height:11px;color:#000;letter-spacing:-0.2px;">56</div>
<div class="t c" style="right:605.5px;top:847.39px;font-size:11px;line-height:11px;color:#000;letter-spacing:-0.2px;">52</div>
<div class="t c" style="right:605.5px;top:866.46px;font-size:11px;line-height:11px;color:#000;letter-spacing:-0.2px;">48</div>
<div class="t c" style="right:605.5px;top:885.54px;font-size:11px;line-height:11px;color:#000;letter-spacing:-0.2px;">44</div>
<div class="t c" style="right:605.5px;top:904.61px;font-size:11px;line-height:11px;color:#000;letter-spacing:-0.2px;">40</div>
<div class="t c" style="right:605.5px;top:923.69px;font-size:11px;line-height:11px;color:#000;letter-spacing:-0.2px;">36</div>
<div class="t c" style="right:605.5px;top:942.76px;font-size:11px;line-height:11px;color:#000;letter-spacing:-0.2px;">32</div>
<div class="t c" style="right:605.5px;top:961.84px;font-size:11px;line-height:11px;color:#000;letter-spacing:-0.2px;">28</div>
<div class="t c" style="right:605.5px;top:980.91px;font-size:11px;line-height:11px;color:#000;letter-spacing:-0.2px;">24</div>
<div class="t c" style="right:605.5px;top:999.99px;font-size:11px;line-height:11px;color:#000;letter-spacing:-0.2px;">20</div>
<div style="position:absolute;left:1322px;top:1007px;width:17px;height:18px;background:#f0f0f0;box-shadow:inset -1px -1px 0 #696969, inset 1px 1px 0 #f0f0f0, inset -2px -2px 0 #a0a0a0, inset 2px 2px 0 #fff;"></div>
<svg style="left:1327px;top:1013px" width="4" height="8"><path d="M4 0 V8 L0 4 Z" fill="#000"/></svg>
<div style="position:absolute;left:1339px;top:1007px;width:200px;height:18px;background:#f0f0f0;box-shadow:inset -1px -1px 0 #696969, inset 1px 1px 0 #f0f0f0, inset -2px -2px 0 #a0a0a0, inset 2px 2px 0 #fff;"></div>
<div style="position:absolute;left:1539px;top:1007px;width:201px;height:18px;background:#fff;border-top:1px solid #f0f0f0;box-shadow:inset 0 1px 0 #a0a0a0, inset 0 -1px 0 #a0a0a0;box-sizing:border-box;"></div>
<div style="position:absolute;left:1740px;top:1007px;width:17px;height:18px;background:#f0f0f0;box-shadow:inset -1px -1px 0 #696969, inset 1px 1px 0 #f0f0f0, inset -2px -2px 0 #a0a0a0, inset 2px 2px 0 #fff;"></div>
<svg style="left:1747px;top:1013px" width="4" height="8"><path d="M0 0 V8 L4 4 Z" fill="#000"/></svg>
<div style="position:absolute;left:1757px;top:1007px;width:1px;height:18px;background:#f0f0f0;"></div>
<div style="position:absolute;left:1758px;top:1007px;width:17px;height:18px;background:#f0f0f0;box-shadow:inset -1px -1px 0 #696969, inset 1px 1px 0 #f0f0f0, inset -2px -2px 0 #a0a0a0, inset 2px 2px 0 #fff;"></div>
<svg style="left:1763px;top:1013px" width="4" height="8"><path d="M4 0 V8 L0 4 Z" fill="#000"/></svg>
<div style="position:absolute;left:1775px;top:1007px;width:16px;height:18px;background:#fff;border-top:1px solid #f0f0f0;box-shadow:inset 0 1px 0 #a0a0a0, inset 0 -1px 0 #a0a0a0;box-sizing:border-box;"></div>
<div style="position:absolute;left:1791px;top:1007px;width:8px;height:18px;background:#f0f0f0;box-shadow:inset -1px -1px 0 #696969, inset 1px 1px 0 #f0f0f0, inset -2px -2px 0 #a0a0a0, inset 2px 2px 0 #fff;"></div>
<div style="position:absolute;left:1799px;top:1007px;width:87px;height:18px;background:#fff;border-top:1px solid #f0f0f0;box-shadow:inset 0 1px 0 #a0a0a0, inset 0 -1px 0 #a0a0a0;box-sizing:border-box;"></div>
<div style="position:absolute;left:1886px;top:1007px;width:17px;height:18px;background:#f0f0f0;box-shadow:inset -1px -1px 0 #696969, inset 1px 1px 0 #f0f0f0, inset -2px -2px 0 #a0a0a0, inset 2px 2px 0 #fff;"></div>
<svg style="left:1893px;top:1013px" width="4" height="8"><path d="M0 0 V8 L4 4 Z" fill="#000"/></svg>
<div style="position:absolute;left:1918px;top:67px;width:1px;height:965px;background:#f0f0f0;"></div>
<div style="position:absolute;left:1919px;top:67px;width:1px;height:965px;background:#f8f8f8;"></div>
<div style="position:absolute;left:0px;top:1030px;width:1920px;height:1px;background:#fff;"></div>
<div style="position:absolute;left:0px;top:1031px;width:1920px;height:1px;background:#c8ccd2;"></div>
<div style="position:absolute;left:0;top:1032px;width:1920px;height:48px;background:linear-gradient(90deg,#e7edf7 0%,#e2e9f6 15%,#d9e2f5 28%,#d3e1f8 38%,#d6dcf1 52%,#d7dbee 58%,#d3def6 66%,#d8def1 76%,#dee7f4 84%,#e3eef8 90%,#dfeaf6 100%);"></div>
<svg style="left:21px;top:1045px" width="23" height="23" viewBox="0 0 23 23"><defs><linearGradient id="wg" x1="0" y1="0" x2="1" y2="1"><stop offset="0" stop-color="#36b3f2"/><stop offset="1" stop-color="#0a6fd6"/></linearGradient></defs><rect x="0" y="0" width="10.6" height="10.6" rx="1" fill="url(#wg)"/><rect x="12" y="0" width="10.6" height="10.6" rx="1" fill="url(#wg)"/><rect x="0" y="12" width="10.6" height="10.6" rx="1" fill="url(#wg)"/><rect x="12" y="12" width="10.6" height="10.6" rx="1" fill="url(#wg)"/></svg>
<svg style="left:64px;top:1043px" width="26" height="25" viewBox="0 0 26 25"><defs><linearGradient id="eg" x1="0" y1="0.2" x2="1" y2="0.6"><stop offset="0" stop-color="#1a8ad6"/><stop offset="0.55" stop-color="#29b5c8"/><stop offset="1" stop-color="#6ad75a"/></linearGradient><linearGradient id="eb" x1="0" y1="0" x2="1" y2="1"><stop offset="0" stop-color="#0c77d0"/><stop offset="1" stop-color="#0a4fa0"/></linearGradient></defs><path d="M1 12.5 C1 5.5 6.5 0.5 13 0.5 C20 0.5 25 5.5 25 11.5 C25 15 22.5 17 19 17 C16.5 17 15 16 15 14.5 C15 13.5 16 12.8 16 11.5 C16 9 13.5 7 10.5 7 C5.5 7 1 10 1 12.5 Z" fill="url(#eg)"/><path d="M1 12.5 C1 10 5.5 7 10.5 7 C13.5 7 16 9 16 11.5 C16 12.8 15 13.5 15 14.5 C15 16 16.5 17 19 17 C21 17 22.5 16.5 23 16.5 C21 21 17 24.5 12.5 24.5 C6 24.5 1 19.5 1 12.5 Z" fill="url(#eb)"/><ellipse cx="13.8" cy="13.8" rx="3.2" ry="2.6" fill="#e4ecf7"/></svg>
<svg style="left:109px;top:1045px" width="25" height="22" viewBox="0 0 25 22"><path d="M0 2 Q0 0 2 0 H8 L10 2 H23 Q25 2 25 4 V20 Q25 22 23 22 H2 Q0 22 0 20 Z" fill="#f6c644"/><rect x="0" y="2" width="10" height="3" fill="#e0a82a"/><rect x="0" y="5" width="25" height="17" rx="1" fill="#fcd55a"/><rect x="6" y="14" width="13" height="8" rx="2" fill="#1b7fd8"/></svg>
<div style="position:absolute;left:146px;top:1037px;width:174px;height:38px;background:rgba(255,255,255,0.55);border-radius:5px;border:1px solid rgba(255,255,255,0.7);box-sizing:border-box;"></div>
<svg style="left:155px;top:1045px" width="21" height="21" viewBox="0 0 21 21"><path d="M10 0.5 L20.5 10.5 L10 20.5 L0 10.5 Z" fill="#0f3a6c"/><path d="M11.5 3.2 A6.2 7.4 0 0 0 9.5 17.8" fill="none" stroke="#e8f0fa" stroke-width="1.3"/><circle cx="14.5" cy="5" r="1.2" fill="#e8f0fa"/></svg>
<div style="position:absolute;left:157px;top:1072px;width:16px;height:3px;background:#0f6cc4;border-radius:2px;"></div>
<div class="t" style="left:185px;top:1050.84px;font-size:12px;line-height:12px;color:#1a1a1a;letter-spacing:-0.1px;">GraviCommander_V1.69</div>
<svg style="left:333px;top:1045px" width="25" height="22" viewBox="0 0 25 22"><rect x="6" y="0" width="19" height="22" rx="2" fill="#21a366"/><rect x="15" y="0" width="10" height="11" fill="#33c481"/><rect x="15" y="11" width="10" height="11" fill="#107c41"/><rect x="0" y="4" width="13" height="14" rx="1.5" fill="#107c41"/><path d="M3 7 L10 15 M10 7 L3 15" stroke="#fff" stroke-width="2"/></svg>
<div style="position:absolute;left:342px;top:1073px;width:6px;height:3px;background:#7d828a;border-radius:1.5px;"></div>
<div class="t" style="left:365.5px;top:1051.18px;font-size:11.6px;line-height:11.6px;color:#1a1a1a;letter-spacing:-0.3px;">Standard_06_20151</div>
<div style="position:absolute;left:473px;top:1048px;width:20px;height:18px;overflow:hidden;"><div class="t" style="left:0;top:3.2px;font-size:12px;line-height:12px;color:#1a1a1a;">[Co</div></div>
<svg style="left:1689px;top:1052px" width="12" height="8"><path d="M1 7 L6 1.5 L11 7" fill="none" stroke="#222" stroke-width="1.3"/></svg>
<div class="t" style="left:1721.5px;top:1051.27px;font-size:11.5px;line-height:11.5px;color:#1a1a1a;letter-spacing:-0.6px;">ENG</div>
<svg style="left:1763px;top:1048px" width="17" height="17" viewBox="0 0 17 17"><circle cx="8" cy="8" r="7" fill="none" stroke="#222" stroke-width="1.1"/><ellipse cx="8" cy="8" rx="3" ry="7" fill="none" stroke="#222" stroke-width="1"/><path d="M1 8 H15 M2 4.5 H14 M2 11.5 H9" stroke="#222" stroke-width="1"/><circle cx="12" cy="12" r="4" fill="#e0ebf6" stroke="#222" stroke-width="1.1"/><path d="M9.5 14.5 L14.5 9.5" stroke="#222" stroke-width="1.1"/></svg>
<svg style="left:1787px;top:1050px" width="16" height="12" viewBox="0 0 16 12"><path d="M1 4 H3.5 L7 1 V11 L3.5 8 H1 Z" fill="none" stroke="#222" stroke-width="1.1"/><path d="M10 4 L14 8 M14 4 L10 8" stroke="#222" stroke-width="1.1"/></svg>
<div class="t" style="right:43px;top:1042.34px;font-size:12px;line-height:12px;color:#1a1a1a;letter-spacing:0px;">11:02</div>
<div class="t" style="right:43px;top:1058.34px;font-size:12px;line-height:12px;color:#1a1a1a;letter-spacing:-0.1px;">18.04.2025</div>
<svg style="left:1885px;top:1049px" width="14" height="15" viewBox="0 0 14 15"><path d="M2 11 V6.5 C2 3.5 4 1.2 7 1.2 C10 1.2 12 3.5 12 6.5 V11 L13 12 H1 Z" fill="none" stroke="#222" stroke-width="1.1" stroke-linejoin="round"/><path d="M5 13 Q7 15 9 13" fill="none" stroke="#222" stroke-width="1.1"/></svg>
</body></html>
